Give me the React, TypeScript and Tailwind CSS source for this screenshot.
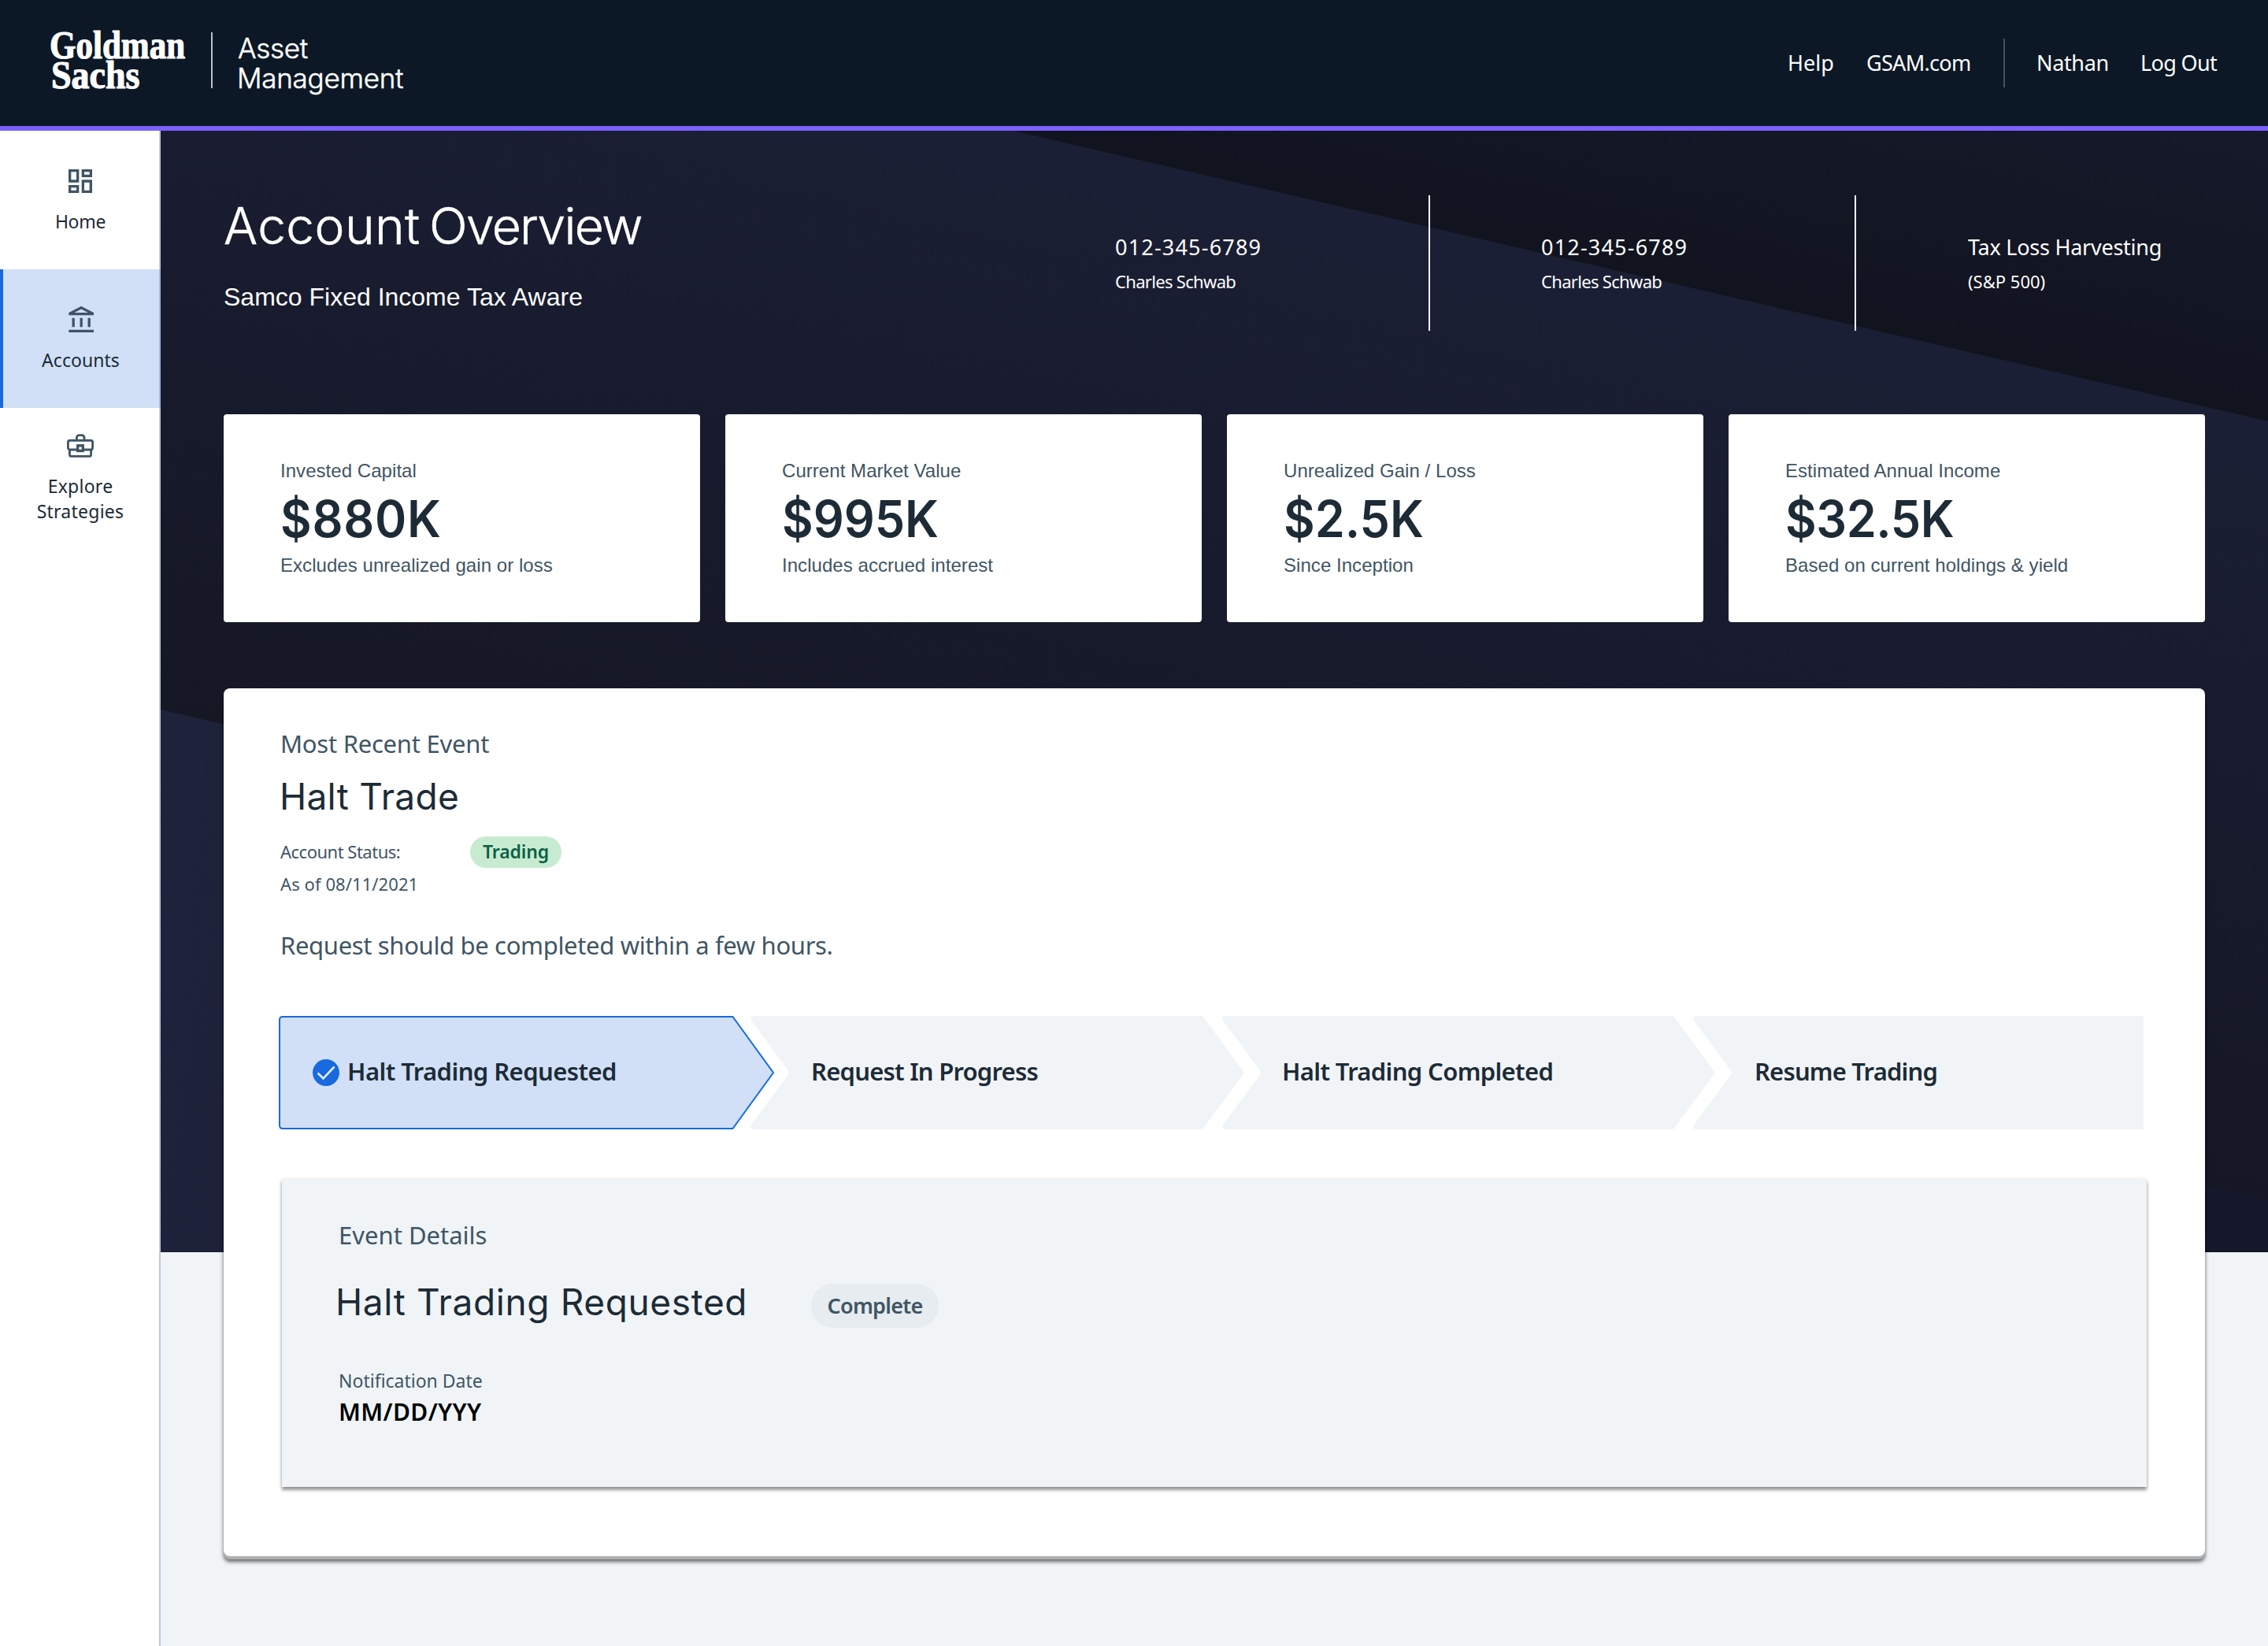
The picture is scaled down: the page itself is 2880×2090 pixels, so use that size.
import { MdOutlineAccountBalance, MdOutlineDashboard } from "react-icons/md";

const SANS = "font-['Noto_Sans',sans-serif]";
const DISPLAY = "font-['Inter',sans-serif]";
const HELV = "font-['Liberation_Sans',sans-serif]";

const stats = [
  { label: "Invested Capital", value: "$880K", note: "Excludes unrealized gain or loss", spacing: "tracking-[0.8px]" },
  { label: "Current Market Value", value: "$995K", note: "Includes accrued interest", spacing: "tracking-normal" },
  { label: "Unrealized Gain / Loss", value: "$2.5K", note: "Since Inception", spacing: "tracking-normal" },
  { label: "Estimated Annual Income", value: "$32.5K", note: "Based on current holdings & yield", spacing: "tracking-[-0.4px]" },
];

function Briefcase() {
  return (
    <svg width="34" height="30" viewBox="0 0 34 29" preserveAspectRatio="none" fill="none" stroke="#3f5564" strokeWidth="2.8">
      <path d="M12.4 7.6V4.8c0-1.9 1.3-3.2 3.2-3.2h3.2c1.9 0 3.2 1.3 3.2 3.2v2.8" />
      <rect x="1.4" y="8" width="31.2" height="11.4" rx="2.4" />
      <path d="M3.4 19v6.4c0 1.2.8 2 2 2h23.2c1.2 0 2-.8 2-2V19" />
      <rect x="13.7" y="14.3" width="6.6" height="6.4" strokeWidth="3.3" fill="#fff" />
    </svg>
  );
}

function Header() {
  return (
    <header className="flex h-[166px] shrink-0 border-b-[6px] border-[#7b61ff] bg-[#0c1825] text-white">
      <div className="ml-[63px] mt-[38px] w-[205px] font-['Liberation_Serif',serif] text-[50px] font-bold leading-[38px] [-webkit-text-stroke:1.2px_#fff]">
        <div className="origin-left scale-x-[0.86]">Goldman</div>
        <div className="ml-[2px] origin-left scale-x-[0.92]">Sachs</div>
      </div>
      <div className="mt-[41px] h-[71px] w-[2px] bg-[#bcc1c6]" />
      <div className={`ml-[31px] mt-[42px] text-[35px] font-light leading-[38px] [-webkit-text-stroke:0.5px_#fff] ${DISPLAY}`}>
        <div className="ml-px tracking-[-0.3px]">Asset</div>
        <div className="tracking-[-0.25px]">Management</div>
      </div>
      <nav className={`ml-auto flex pt-[60px] text-[27px] leading-[40px] ${SANS}`}>
        <a className="-mr-px ml-px w-[100px]">Help</a>
        <a className="-mr-px ml-px w-[175px] tracking-[-0.68px]">GSAM.com</a>
        <div className="-mt-[11px] mr-[40px] h-[62px] w-[2px] bg-[#46535f]" />
        <a className="w-[132px] tracking-[-0.35px]">Nathan</a>
        <a className="w-[162px] tracking-[-0.65px]">Log Out</a>
      </nav>
    </header>
  );
}

function Sidebar() {
  return (
    <aside
      className={`w-[204px] shrink-0 bg-white text-center text-[23px] leading-[32px] tracking-[0.05px] text-[#1c2b36] shadow-[inset_-2px_0_0_#bccbd9] ${SANS}`}
    >
      <div className="flex h-[176px] flex-col items-center pt-[44px]">
        <MdOutlineDashboard size={40} color="#3f5564" />
        <div className="mt-[15px] tracking-[-0.3px]">Home</div>
      </div>
      <div className="flex h-[176px] flex-col items-center bg-[#d1e0f7] pt-[45px] shadow-[inset_4px_0_0_#186ade,inset_-2px_0_0_#9db8dc]">
        <MdOutlineAccountBalance size={40} color="#3f5564" className="ml-[3px]" />
        <div className="ml-[1px] mt-[14px]">Accounts</div>
      </div>
      <div className="flex flex-col items-center pt-[33px]">
        <Briefcase />
        <div className="mt-[20px] tracking-[0.25px]">
          Explore
          <br />
          Strategies
        </div>
      </div>
    </aside>
  );
}

function HeroBackdrop() {
  return (
    <svg className="absolute left-0 top-0 h-[1424px] w-full" viewBox="0 0 2676 1424" preserveAspectRatio="none">
      <defs>
        <linearGradient id="mid" gradientUnits="userSpaceOnUse" x1="1086" y1="0" x2="868" y2="937">
          <stop offset="0" stopColor="#1b1f35" />
          <stop offset="1" stopColor="#151725" />
        </linearGradient>
        <linearGradient id="top" gradientUnits="userSpaceOnUse" x1="1881" y1="185" x2="1963" y2="-166">
          <stop offset="0" stopColor="#11141f" />
          <stop offset="1" stopColor="#16192a" />
        </linearGradient>
        <linearGradient id="low" gradientUnits="userSpaceOnUse" x1="0" y1="735" x2="2676" y2="1358">
          <stop offset="0" stopColor="#1e223a" />
          <stop offset="1" stopColor="#15182a" />
        </linearGradient>
      </defs>
      <rect width="2676" height="1424" fill="url(#mid)" />
      <path d="M1082 0L2676 369V0Z" fill="url(#top)" />
      <path d="M0 735L2676 1358V1424H0Z" fill="url(#low)" />
    </svg>
  );
}

function AccountInfo({ title, sub, tight }: { title: string; sub: string; tight?: boolean }) {
  return (
    <div className="w-[398px] pt-[46px]">
      <div className={`text-[27px] leading-[40px] ${tight ? "tracking-[-0.25px]" : "tracking-[1.2px]"}`}>{title}</div>
      <div className={`mt-[7px] text-[22px] leading-[32px] ${tight ? "" : "tracking-[-0.68px]"}`}>{sub}</div>
    </div>
  );
}

function Steps() {
  return (
    <div className="relative -ml-[2px] mt-[70px] h-[144px] w-[2368px]">
      <svg className="absolute left-0 top-0" width="2368" height="144" viewBox="0 0 2368 144">
        <path d="M5 1H576.5L628 72L576.5 143H5Q1 143 1 139V5Q1 1 5 1Z" fill="#d1e0f7" stroke="#186ade" strokeWidth="2" />
        <g fill="#f1f4f7">
          <path d="M603 0H1173L1224 69Q1226 72 1224 75L1173 144H603Q598 144 600 138L646 76Q649 72 646 68L600 6Q598 0 603 0Z" />
          <path d="M1202 0H1771L1822 69Q1824 72 1822 75L1771 144H1202Q1197 144 1199 138L1245 76Q1248 72 1245 68L1199 6Q1197 0 1202 0Z" />
          <path d="M1800 0H2368V144H1800Q1795 144 1797 138L1843 76Q1846 72 1843 68L1797 6Q1795 0 1800 0Z" />
        </g>
      </svg>
      <div className="relative flex h-full items-center pb-[3px] text-[31px] font-semibold text-[#1c2b36]">
        <div className="flex w-[676px] items-center pl-[43px] tracking-[-0.56px]">
          <svg width="34" height="34" viewBox="0 0 34 34" className="mr-[10px] mt-[3px]">
            <circle cx="17" cy="17" r="17" fill="#186ade" />
            <path d="M6.5 17.5L13.5 24.5L27.5 9.5" fill="none" stroke="#e3edfa" strokeWidth="2.6" />
          </svg>
          Halt Trading Requested
        </div>
        <div className="w-[598px] tracking-[-0.77px]">Request In Progress</div>
        <div className="w-[600px] tracking-[-0.65px]">Halt Trading Completed</div>
        <div className="tracking-[-0.82px]">Resume Trading</div>
      </div>
    </div>
  );
}

function EventDetails() {
  return (
    <div className="ml-[2px] mt-[63px] h-[391px] w-[2368px] bg-[#f0f4f7] pl-[72px] pt-[51px] shadow-[0_4px_4px_rgba(0,0,0,0.4),0_0_5px_rgba(0,0,0,0.1)]">
      <div className="text-[31px] leading-[40px] text-[#3f5564]">Event Details</div>
      <div className="-ml-[4px] mt-[35px] flex h-[63px]">
        <div className={`w-[604px] text-[46px] leading-[60px] tracking-[0.62px] text-[#1c2b36] ${DISPLAY}`}>
          Halt Trading Requested
        </div>
        <div className="mt-[7px] h-[56px] w-[162px] rounded-full bg-[#e6ecef] text-center text-[27px] font-semibold leading-[56px] tracking-[-0.75px] text-[#3f5564]">
          Complete
        </div>
      </div>
      <div className="mt-[51px] text-[23px] leading-[32px] text-[#3f5564]">Notification Date</div>
      <div className="mt-[4px] text-[30px] font-semibold leading-[40px] tracking-[0.4px] text-black">MM/DD/YYY</div>
    </div>
  );
}

export default function App() {
  return (
    <div className="flex h-[2090px] w-[2880px] flex-col overflow-hidden bg-[#f0f4f7]">
      <Header />
      <div className="flex flex-1">
        <Sidebar />
        <main className="relative flex-1">
          <HeroBackdrop />
          <div className={`relative w-[2676px] px-[80px] ${SANS}`}>
            <div className="flex h-[360px] pt-[82px] text-white">
              <div className="w-[1132px]">
                <h1 className={`-mt-px text-[64px] font-light leading-[80px] tracking-[-1.6px] [-webkit-text-stroke:0.6px_#fff] ${DISPLAY}`}>
                  <span className="tracking-[0.4px] [word-spacing:-7px]">Account </span>Overview
                </h1>
                <div className={`mt-[30px] text-[32px] leading-[40px] ${HELV}`}>
                  Samco Fixed Income Tax Aware
                </div>
              </div>
              <AccountInfo title="012-345-6789" sub="Charles Schwab" />
              <div className="mr-[141px] h-[172px] w-[2px] bg-white" />
              <AccountInfo title="012-345-6789" sub="Charles Schwab" />
              <div className="mr-[142px] h-[172px] w-[2px] bg-white" />
              <div className="-mr-[100px]">
                <AccountInfo title="Tax Loss Harvesting" sub="(S&P 500)" tight />
              </div>
            </div>
            <div className="grid grid-cols-4 gap-[32px]">
              {stats.map((s) => (
                <div key={s.label} className={`h-[264px] rounded-[4px] bg-white pl-[72px] pt-[56px] text-[24px] leading-[32px] tracking-[0.05px] text-[#3f5564] ${HELV}`}>
                  <div>{s.label}</div>
                  <div className={`mt-[5px] origin-left scale-x-[0.953] text-[64px] font-semibold leading-[80px] text-[#1c2b36] ${s.spacing} ${DISPLAY}`}>
                    {s.value}
                  </div>
                  <div className="mt-[3px]">{s.note}</div>
                </div>
              ))}
            </div>
            <section className="mt-[84px] h-[1102px] rounded-[8px] bg-white pl-[72px] pt-[50px] text-[#3f5564] shadow-[0_4px_0_0_#adafb0,0_7px_5px_0_rgba(0,0,0,0.6)]">
              <div className="text-[31px] leading-[40px] tracking-[-0.25px]">Most Recent Event</div>
              <h2 className={`-ml-px mt-[17px] text-[46px] font-normal leading-[60px] tracking-[0.3px] text-[#1c2b36] ${DISPLAY}`}>
                Halt Trade
              </h2>
              <div className="mt-[21px] flex h-[40px] text-[22px] leading-[40px]">
                <div className="-mt-px w-[241px] tracking-[-0.5px]">Account Status:</div>
                <div className="w-[116px] rounded-full bg-[#c7ebd1] text-center text-[23px] font-semibold leading-[38px] tracking-[-0.1px] text-[#0b6045]">
                  Trading
                </div>
              </div>
              <div className="mt-[4px] text-[22px] leading-[32px] tracking-[0.08px]">As of 08/11/2021</div>
              <div className="mt-[42px] text-[31px] leading-[40px] tracking-[-0.34px]">
                Request should be completed within a few hours.
              </div>
              <Steps />
              <EventDetails />
            </section>
          </div>
        </main>
      </div>
    </div>
  );
}
